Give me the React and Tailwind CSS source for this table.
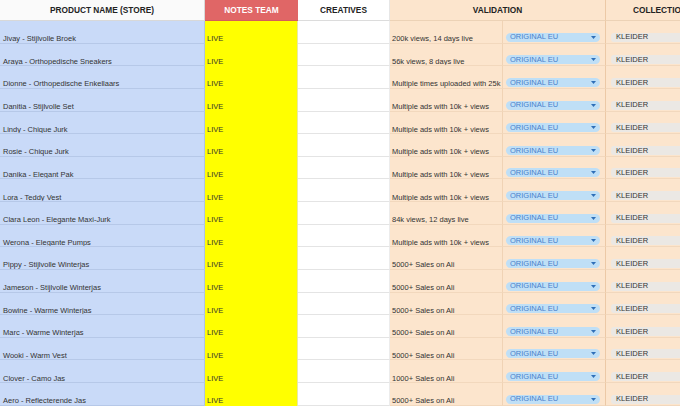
const ROWS = [
  ['Jivay - Stijlvolle Broek', '200k views, 14 days live'],
  ['Araya - Orthopedische Sneakers', '56k views, 8 days live'],
  ['Dionne - Orthopedische Enkellaars', 'Multiple times uploaded with 25k views'],
  ['Danitia - Stijlvolle Set', 'Multiple ads with 10k + views'],
  ['Lindy - Chique Jurk', 'Multiple ads with 10k + views'],
  ['Rosie - Chique Jurk', 'Multiple ads with 10k + views'],
  ['Danika - Elegant Pak', 'Multiple ads with 10k + views'],
  ['Lora - Teddy Vest', 'Multiple ads with 10k + views'],
  ['Clara Leon - Elegante Maxi-Jurk', '84k views, 12 days live'],
  ['Werona - Elegante Pumps', 'Multiple ads with 10k + views'],
  ['Pippy - Stijlvolle Winterjas', '5000+ Sales on Ali'],
  ['Jameson - Stijlvolle Winterjas', '5000+ Sales on Ali'],
  ['Bowine - Warme Winterjas', '5000+ Sales on Ali'],
  ['Marc - Warme Winterjas', '5000+ Sales on Ali'],
  ['Wooki - Warm Vest', '5000+ Sales on Ali'],
  ['Clover - Camo Jas', '1000+ Sales on Ali'],
  ['Aero - Reflecterende Jas', '5000+ Sales on Ali'],
]

function Row({ name, validation }) {
  return (
    <div className="flex h-[22.625px] shrink-0">
      <div className="w-[205px] shrink-0 bg-[#c9daf8] border-b border-[#b6c8e8] border-r border-r-[#aec3e6] flex items-end pl-[3px] text-[#333] overflow-hidden whitespace-nowrap">
        {name}
      </div>
      <div className="w-[93px] shrink-0 bg-[#ffff00] flex items-end pb-[1px] pl-[2px] text-[#333] border-r border-[#e8e8a8]">
        LIVE
      </div>
      <div className="w-[92px] shrink-0 bg-white border-b border-[#e4e4e4] border-r border-r-[#ececec]" />
      <div className="w-[113px] shrink-0 bg-[#fce5cd] border-b border-[#f2d8bd] border-r border-r-[#f0d3b5] flex items-end pl-[2px] text-[#333] overflow-hidden whitespace-nowrap">
        {validation}
      </div>
      <div className="w-[103px] shrink-0 bg-[#fce5cd] border-b border-[#f2d8bd] border-r border-r-[#ecc9a6] flex items-end pb-[1px] pl-[3px] pr-[5px]">
        <div className="flex-1 h-[9px] rounded-full bg-[#bfdff6] flex items-center pl-[4px] pr-[4px] text-[#4a82cc]">
          <span className="flex-1 leading-none">ORIGINAL EU</span>
          <svg width="5" height="3" viewBox="0 0 5 3"><path d="M0 0h5L2.5 3z" fill="#2f6fb8" /></svg>
        </div>
      </div>
      <div className="flex-1 bg-[#fce5cd] border-b border-[#f2d8bd] flex items-end pb-[1px] pl-[5px]">
        <div className="flex-1 h-[9px] flex items-center text-[#333] bg-[#ebe8e4] rounded-l-[3px] pl-[5px] whitespace-nowrap">
          KLEIDER
        </div>
      </div>
    </div>
  )
}

export default function App() {
  return (
    <div className="w-[680px] h-[409px] overflow-hidden bg-white text-[7.5px] leading-none font-['Liberation_Sans',Arial,sans-serif]">
      <div className="flex h-[21px] font-bold text-[8.3px]">
        <div className="w-[205px] shrink-0 bg-[#fafafa] border-b border-[#d8d8d8] border-r border-r-[#d8d8d8] flex items-center justify-center text-[#222]">
          PRODUCT NAME (STORE)
        </div>
        <div className="w-[93px] shrink-0 bg-[#e06666] border-b border-[#d35c5c] flex items-center justify-center text-white">
          NOTES TEAM
        </div>
        <div className="w-[92px] shrink-0 bg-white border-b border-[#dcdcdc] border-r border-r-[#e6e6e6] flex items-center justify-center text-[#222]">
          CREATIVES
        </div>
        <div className="w-[216px] shrink-0 bg-[#fce5cd] border-b border-[#ecd2b6] border-r border-r-[#ecc9a6] flex items-center justify-center text-[#222]">
          VALIDATION
        </div>
        <div className="flex-1 bg-[#fce5cd] border-b border-[#ecd2b6] flex items-center pl-[27px] text-[#222] whitespace-nowrap overflow-hidden">
          COLLECTION
        </div>
      </div>
      {ROWS.map(([name, validation]) => (
        <Row key={name} name={name} validation={validation} />
      ))}
    </div>
  )
}
